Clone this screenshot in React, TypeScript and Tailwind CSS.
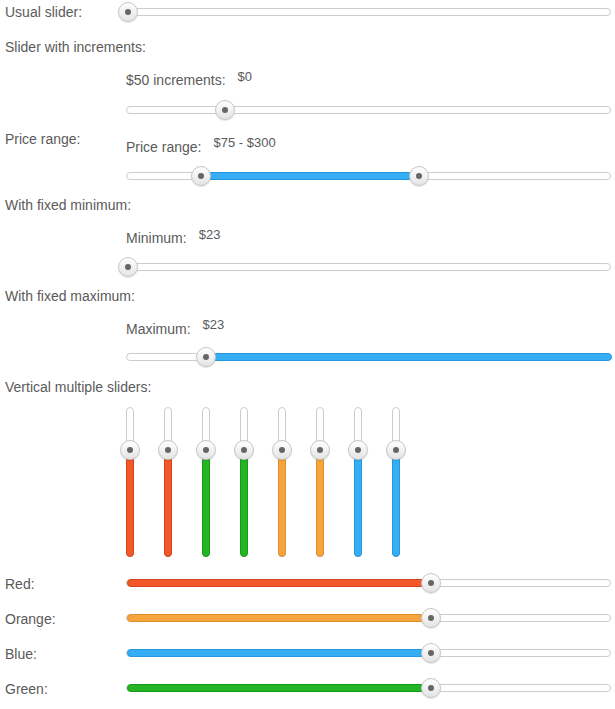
import React from 'react';

type Fill = { from: number; to: number; color: string };

const COLORS: Record<string, string> = {
    blue: 'bg-[#35aef5] border-[#2597dc]',
    red: 'bg-[#f2582a] border-[#d4431b]',
    orange: 'bg-[#f6a43e] border-[#e08e2c]',
    green: 'bg-[#24b424] border-[#179a17]',
};

function Thumb({ style }: { style: React.CSSProperties }) {
    return (
        <div
            className="absolute top-1/2 w-5 h-5 -translate-x-1/2 -translate-y-1/2 rounded-full border border-[#c6c6c6] bg-gradient-to-b from-white to-[#e4e4e4] shadow-[0_1px_1px_rgba(0,0,0,0.12)] flex items-center justify-center"
            style={style}
        >
            <div className="w-[6px] h-[6px] rounded-full bg-[#666]" />
        </div>
    );
}

// horizontal slider, positions given in px from track start
function Slider({ thumbs, fill }: { thumbs: number[]; fill?: Fill }) {
    return (
        <div className="relative w-[485px] h-[8px] rounded-full border border-[#cdcdcd] bg-white">
            {fill && (
                <div
                    className={`absolute -top-px -bottom-px rounded-full border ${COLORS[fill.color]}`}
                    style={{ left: fill.from, width: fill.to - fill.from }}
                />
            )}
            {thumbs.map((t, i) => (
                <Thumb key={i} style={{ left: t }} />
            ))}
        </div>
    );
}

function VSlider({ color }: { color: string }) {
    return (
        <div className="relative w-[8px] h-[150px] rounded-full border border-[#cdcdcd] bg-white">
            <div className={`absolute -left-px -right-px top-[42px] -bottom-px rounded-b-full border ${COLORS[color]}`} />
            <div
                className="absolute left-1/2 top-[42px] w-5 h-5 -translate-x-1/2 -translate-y-1/2 rounded-full border border-[#c6c6c6] bg-gradient-to-b from-white to-[#e4e4e4] shadow-[0_1px_1px_rgba(0,0,0,0.12)] flex items-center justify-center"
            >
                <div className="w-[6px] h-[6px] rounded-full bg-[#666]" />
            </div>
        </div>
    );
}

function ValueRow({ label, value, shift }: { label: string; value: string; shift: string }) {
    return (
        <div className="h-[16px] flex items-center">
            <span>{label}</span>
            <span className={`ml-[12px] text-[13px] ${shift}`}>{value}</span>
        </div>
    );
}

export default function App() {
    const colorRows = [
        { label: 'Red:', color: 'red' },
        { label: 'Orange:', color: 'orange' },
        { label: 'Blue:', color: 'blue' },
        { label: 'Green:', color: 'green' },
    ];
    const verticals = ['red', 'red', 'green', 'green', 'orange', 'orange', 'blue', 'blue'];

    return (
        <div className="w-[615px] min-h-[709px] bg-white text-[14px] leading-[16px] text-[#5a5a5a] font-['Liberation_Sans',Arial,sans-serif] pb-[9px]">
            {/* usual */}
            <div className="h-[24px] flex items-center">
                <div className="w-[126px] pl-[5px]">Usual slider:</div>
                <Slider thumbs={[1]} />
            </div>

            {/* increments */}
            <div className="mt-[15px] h-[16px] pl-[5px] flex items-center">Slider with increments:</div>
            <div className="mt-[17px] pl-[126px]">
                <ValueRow label="$50 increments:" value="$0" shift="mb-[6px]" />
            </div>
            <div className="mt-[12px] h-[20px] pl-[126px] flex items-center">
                <Slider thumbs={[98]} />
            </div>

            {/* price range */}
            <div className="mt-[11px] flex">
                <div className="w-[126px] pl-[5px] h-[16px] flex items-center">Price range:</div>
                <div className="flex flex-col">
                    <div className="mt-[8px]">
                        <ValueRow label="Price range:" value="$75 - $300" shift="mb-[8px]" />
                    </div>
                    <div className="mt-[11px] h-[20px] flex items-center">
                        <Slider thumbs={[74, 292]} fill={{ from: 74, to: 292, color: 'blue' }} />
                    </div>
                </div>
            </div>

            {/* fixed minimum */}
            <div className="mt-[11px] h-[16px] pl-[5px] flex items-center">With fixed minimum:</div>
            <div className="mt-[17px] pl-[126px]">
                <ValueRow label="Minimum:" value="$23" shift="mb-[6px]" />
            </div>
            <div className="mt-[11px] h-[20px] pl-[126px] flex items-center">
                <Slider thumbs={[1]} />
            </div>

            {/* fixed maximum */}
            <div className="mt-[11px] h-[16px] pl-[5px] flex items-center">With fixed maximum:</div>
            <div className="mt-[17px] pl-[126px]">
                <ValueRow label="Maximum:" value="$23" shift="mb-[8px]" />
            </div>
            <div className="mt-[10px] h-[20px] pl-[126px] flex items-center">
                <Slider thumbs={[79]} fill={{ from: 79, to: 485, color: 'blue' }} />
            </div>

            {/* vertical */}
            <div className="mt-[12px] h-[16px] pl-[5px] flex items-center">Vertical multiple sliders:</div>
            <div className="mt-[12px] pl-[126px] flex gap-[30px]">
                {verticals.map((c, i) => (
                    <VSlider key={i} color={c} />
                ))}
            </div>

            {/* colours */}
            <div className="mt-[14px] flex flex-col gap-[11px]">
                {colorRows.map((r) => (
                    <div key={r.label} className="h-[24px] flex items-center">
                        <div className="w-[126px] pl-[5px] pt-[2px]">{r.label}</div>
                        <Slider thumbs={[304]} fill={{ from: 0, to: 304, color: r.color }} />
                    </div>
                ))}
            </div>
        </div>
    );
}
